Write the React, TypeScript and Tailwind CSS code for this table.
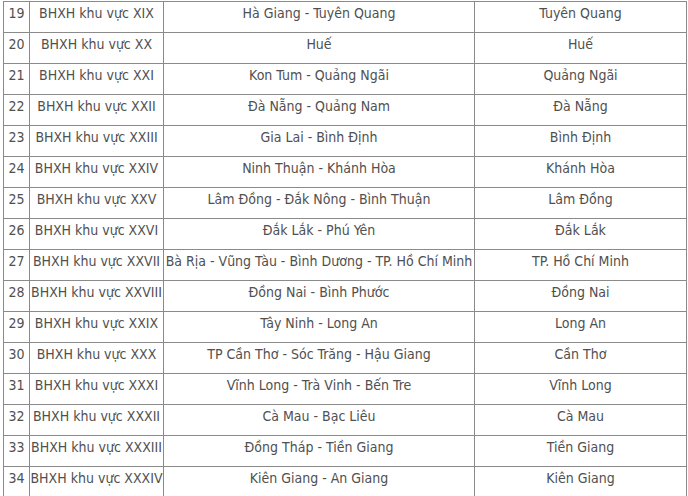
const rows: [number, string, string, string][] = [
  [19, 'BHXH khu vực XIX', 'Hà Giang - Tuyên Quang', 'Tuyên Quang'],
  [20, 'BHXH khu vực XX', 'Huế', 'Huế'],
  [21, 'BHXH khu vực XXI', 'Kon Tum - Quảng Ngãi', 'Quảng Ngãi'],
  [22, 'BHXH khu vực XXII', 'Đà Nẵng - Quảng Nam', 'Đà Nẵng'],
  [23, 'BHXH khu vực XXIII', 'Gia Lai - Bình Định', 'Bình Định'],
  [24, 'BHXH khu vực XXIV', 'Ninh Thuận - Khánh Hòa', 'Khánh Hòa'],
  [25, 'BHXH khu vực XXV', 'Lâm Đồng - Đắk Nông - Bình Thuận', 'Lâm Đồng'],
  [26, 'BHXH khu vực XXVI', 'Đắk Lắk - Phú Yên', 'Đắk Lắk'],
  [27, 'BHXH khu vực XXVII', 'Bà Rịa - Vũng Tàu - Bình Dương - TP. Hồ Chí Minh', 'TP. Hồ Chí Minh'],
  [28, 'BHXH khu vực XXVIII', 'Đồng Nai - Bình Phước', 'Đồng Nai'],
  [29, 'BHXH khu vực XXIX', 'Tây Ninh - Long An', 'Long An'],
  [30, 'BHXH khu vực XXX', 'TP Cần Thơ - Sóc Trăng - Hậu Giang', 'Cần Thơ'],
  [31, 'BHXH khu vực XXXI', 'Vĩnh Long - Trà Vinh - Bến Tre', 'Vĩnh Long'],
  [32, 'BHXH khu vực XXXII', 'Cà Mau - Bạc Liêu', 'Cà Mau'],
  [33, 'BHXH khu vực XXXIII', 'Đồng Tháp - Tiền Giang', 'Tiền Giang'],
  [34, 'BHXH khu vực XXXIV', 'Kiên Giang - An Giang', 'Kiên Giang'],
];

export default function App() {
  return (
    <div className="w-[688px] h-[496px] overflow-hidden bg-white pt-px pl-[3px]">
      <table
        className="table-fixed border-collapse w-[683px] text-[14px] leading-[18px] text-[#505050]"
        style={{ fontFamily: '"DejaVu Sans Condensed", "Liberation Sans", Arial, sans-serif' }}
      >
        <colgroup>
          <col className="w-[26px]" />
          <col className="w-[134px]" />
          <col className="w-[311px]" />
          <col className="w-[212px]" />
        </colgroup>
        <tbody>
          {rows.map(([n, area, provinces, seat]) => (
            <tr key={n} className="h-[31px]">
              <td className="border border-[#8a8a8a] align-top pt-[2px] text-center whitespace-nowrap">{n}</td>
              <td className="border border-[#8a8a8a] align-top pt-[2px] text-center whitespace-nowrap">{area}</td>
              <td className="border border-[#8a8a8a] align-top pt-[2px] text-center whitespace-nowrap">{provinces}</td>
              <td className="border border-[#8a8a8a] align-top pt-[2px] text-center whitespace-nowrap">{seat}</td>
            </tr>
          ))}
        </tbody>
      </table>
    </div>
  );
}
